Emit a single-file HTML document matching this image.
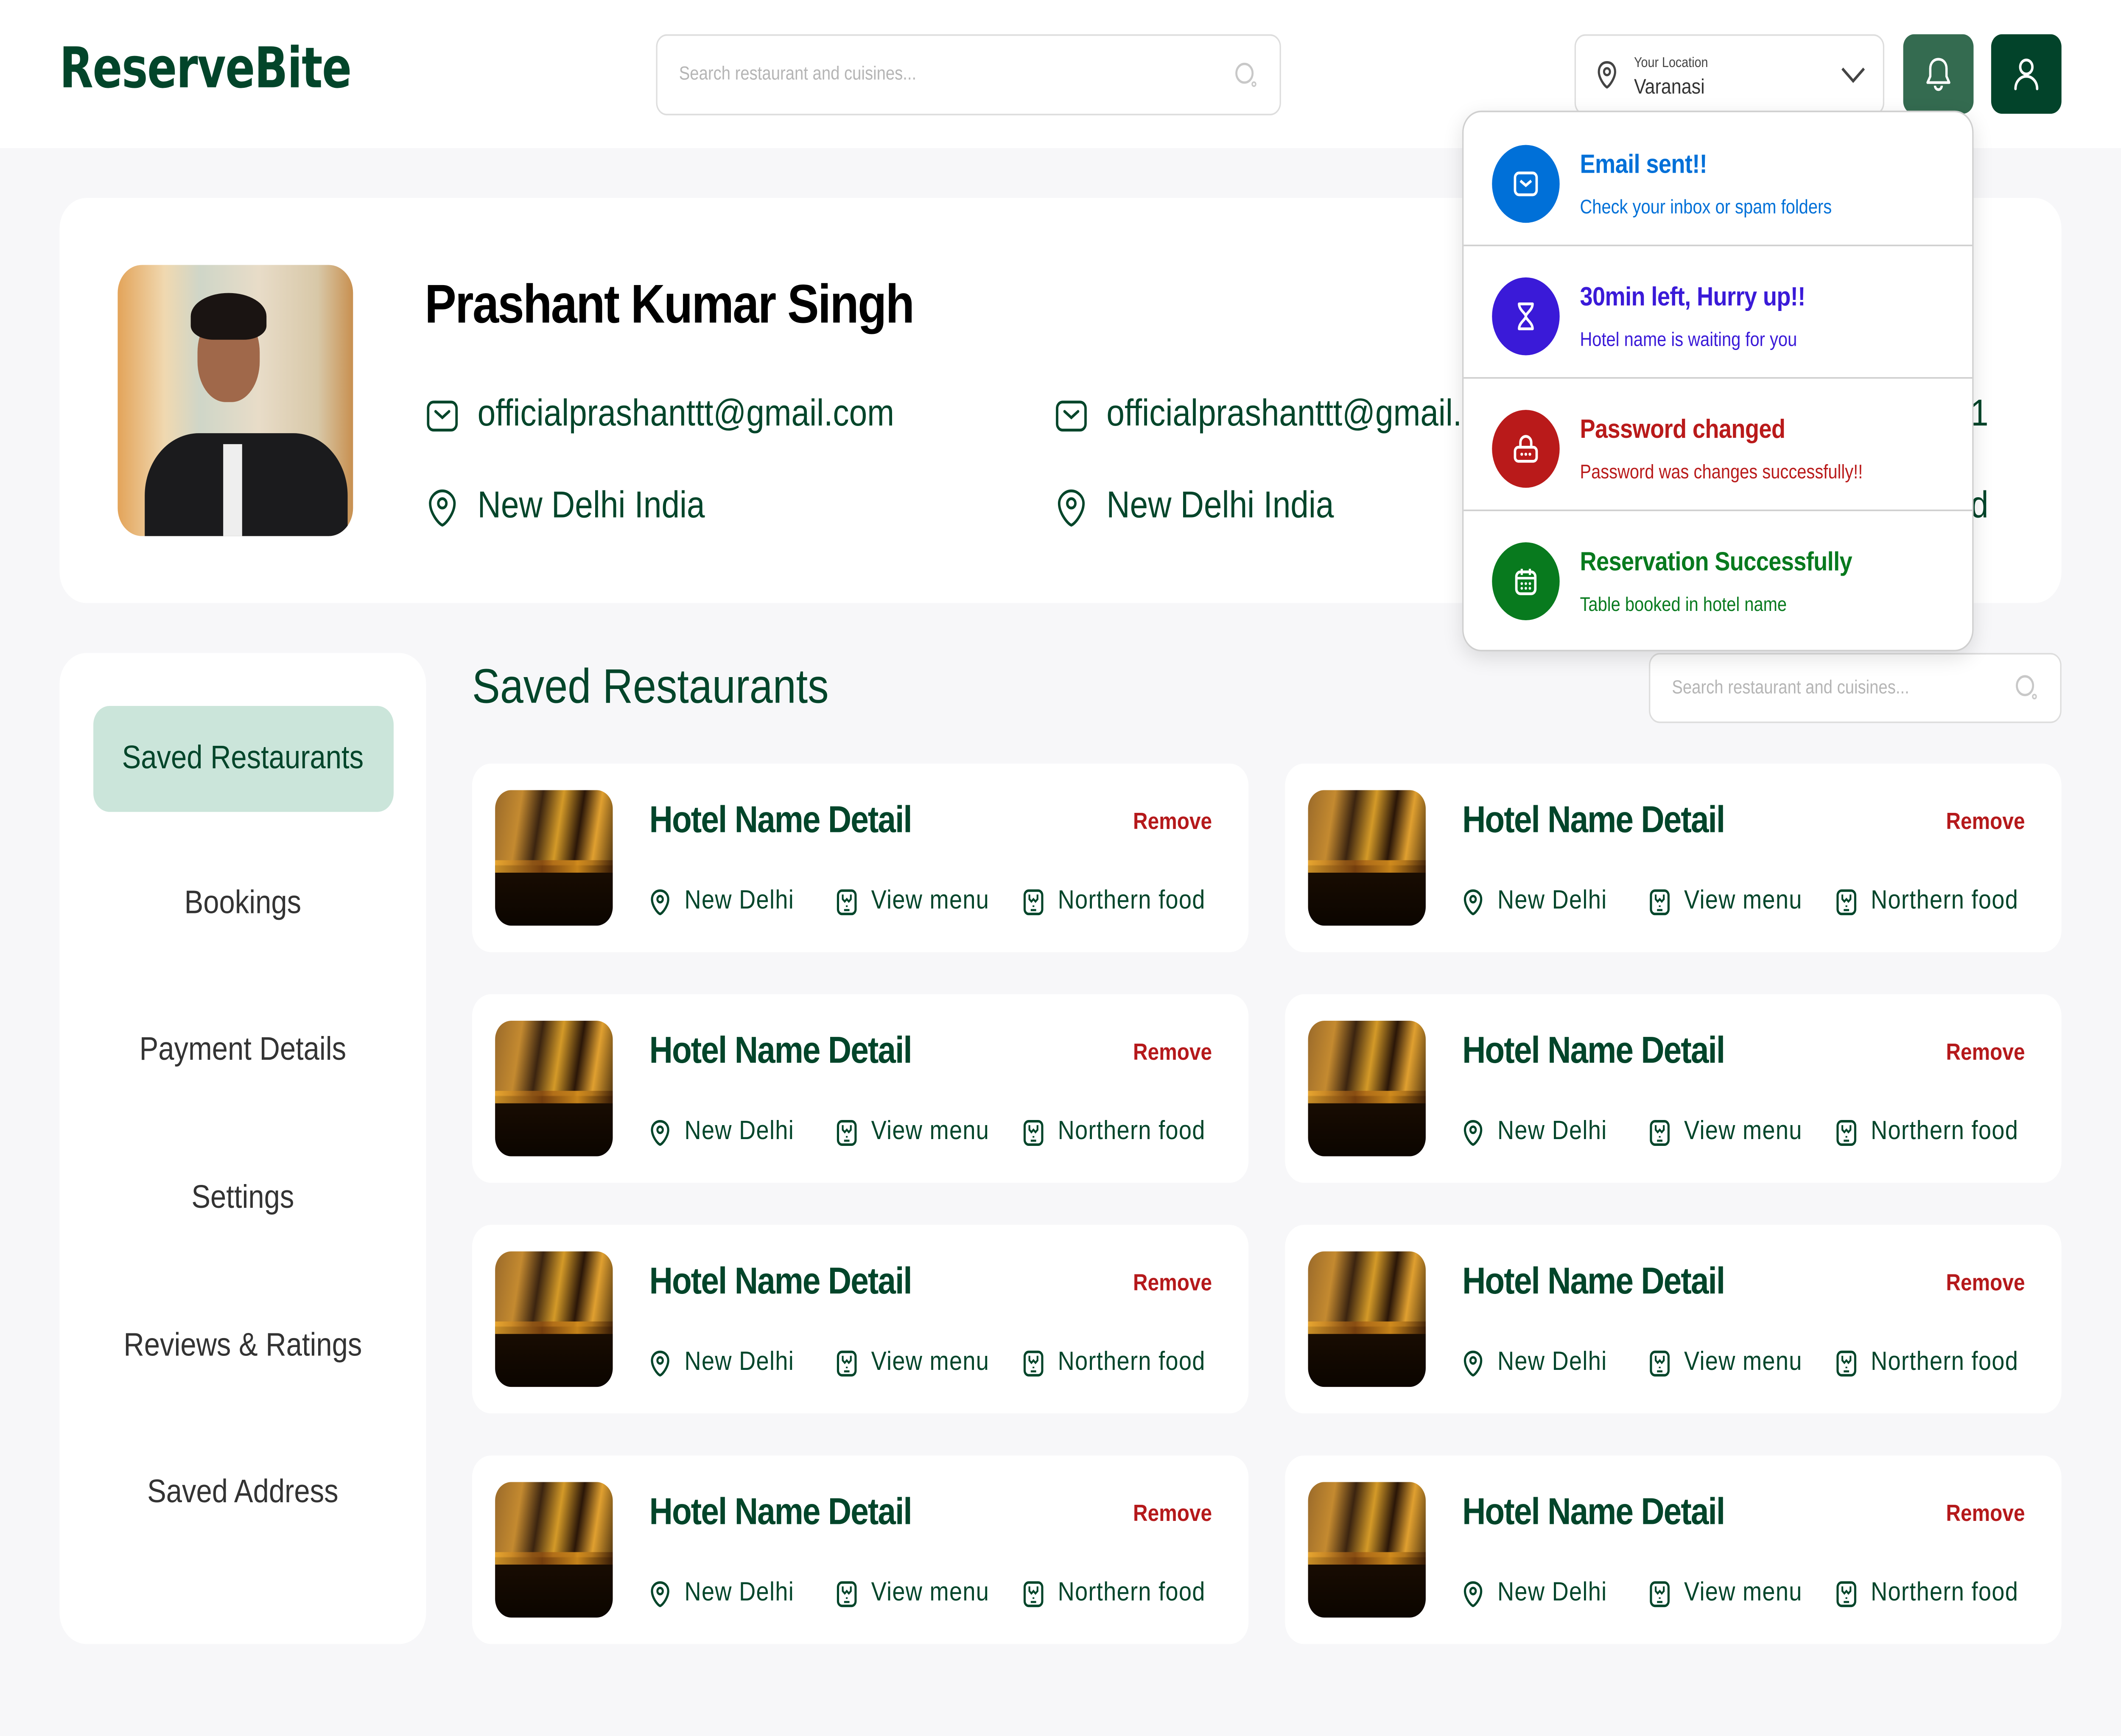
<!DOCTYPE html>
<html><head><meta charset="utf-8"><style>
html,body{margin:0;padding:0;width:100%;height:100%;overflow:hidden;}
body{background:#f7f7f9;font-family:"Liberation Sans",sans-serif;}
#w{position:absolute;left:0;top:0;width:1568px;height:1114px;transform-origin:0 0;transform:scale(3.673469);background:#f7f7f9;overflow:hidden;}
.a{position:absolute;}
.hdr{left:0;top:0;width:1568px;height:95px;background:#fff;}
.logo{left:44px;top:24px;font-size:36px;color:#02452a;font-weight:bold;font-family:"DejaVu Sans","Liberation Sans",sans-serif;letter-spacing:-0.5px;transform:scaleX(0.9);transform-origin:0 0;}
.sb{background:#fff;border:1.5px solid #ddd;border-radius:8px;box-sizing:border-box;}
.ph{font-size:12px;color:#b5b5b5;}
.card{background:#fff;border-radius:14px;width:574px;height:121px;overflow:hidden;}
.img{left:17px;top:17px;width:87px;height:87px;border-radius:12px;overflow:hidden;
background:linear-gradient(180deg,rgba(0,0,0,0) 55%,#1a0d02 56%,#0b0500 100%),linear-gradient(100deg,#9a6a2a 0%,#c48a30 20%,#3b2410 35%,#d49a28 50%,#2a1608 65%,#e0a030 78%,#1a0c04 100%);}
.img:before{content:"";position:absolute;left:0;top:52%;width:100%;height:8px;background:linear-gradient(90deg,#f5b030,#8a4a10 40%,#f0a020 70%,#402008);opacity:.8}
.ttl{left:131px;top:23px;font-size:24px;font-weight:bold;color:#02452a;line-height:28px;letter-spacing:-0.6px;}
.rm{right:27px;top:29px;font-size:15px;color:#b5191b;font-weight:bold;line-height:18px;}
.rw{top:78px;font-size:17px;color:#02452a;line-height:20px;letter-spacing:0.4px;}
.ic{top:80px;}
.side{left:44px;top:419px;width:271px;height:636px;background:#fff;border-radius:20px;}
.si{left:0;width:271px;text-align:center;font-size:21px;color:#333;line-height:26px;}
.nt{left:1081px;top:71px;width:378px;height:347px;background:#fff;border:1px solid #cfcfcf;border-radius:14px;box-shadow:0 4px 14px rgba(0,0,0,.12);box-sizing:border-box;overflow:hidden;}
.ni{left:0;width:378px;height:85px;border-bottom:1px solid #cfcfcf;}
.cir{left:21px;top:21px;width:50px;height:50px;border-radius:50%;}
.nt1{left:86px;top:23px;font-size:17px;font-weight:bold;line-height:22px;letter-spacing:-0.2px;}
.nt2{left:86px;top:53px;font-size:12.5px;line-height:16px;}
.pt{font-size:24px;color:#02452a;line-height:28px;}
</style></head><body><div id="w">

<div class="a hdr"></div>
<div class="a logo">ReserveBite</div>
<div class="a sb" style="left:485px;top:22px;width:462px;height:52px;"></div>
<div class="a ph" style="left:502px;top:40px;">Search restaurant and cuisines...</div>
<svg class="a" style="left:912px;top:39px" width="18" height="18" viewBox="0 0 18 18"><circle cx="8" cy="8" r="6" fill="none" stroke="#c8c8c8" stroke-width="1.5"/><circle cx="15" cy="15" r="1.3" fill="none" stroke="#c8c8c8" stroke-width="1"/></svg>

<div class="a sb" style="left:1164px;top:22px;width:229px;height:52px;"></div>
<svg class="a" style="left:1179px;top:38px" width="18" height="20" viewBox="0 0 18 20"><path d="M9 2C5 2 3 5 3 8c0 4 4 9 6 10 2-1 6-6 6-10 0-3-2-6-6-6z" fill="none" stroke="#444" stroke-width="1.6"/><circle cx="9" cy="8" r="2.2" fill="none" stroke="#444" stroke-width="1.5"/></svg>
<div class="a" style="left:1208px;top:35px;font-size:9px;color:#444;">Your Location</div>
<div class="a" style="left:1208px;top:48px;font-size:13.5px;color:#333;">Varanasi</div>
<svg class="a" style="left:1360px;top:41px" width="20" height="14" viewBox="0 0 20 14"><path d="M2 3l8 8 8-8" fill="none" stroke="#444" stroke-width="1.8"/></svg>

<div class="a" style="left:1407px;top:22px;width:52px;height:51px;border-radius:8px;background:#346b50;"></div>
<svg class="a" style="left:1422px;top:36px" width="22" height="24" viewBox="0 0 22 24"><path d="M11 2c-4 0-6 3-6 6v5l-2 4h16l-2-4V8c0-3-2-6-6-6z" fill="none" stroke="#fff" stroke-width="1.7" stroke-linejoin="round"/><path d="M8.5 19a2.5 2.5 0 005 0" fill="none" stroke="#fff" stroke-width="1.7"/></svg>
<div class="a" style="left:1472px;top:22px;width:52px;height:51px;border-radius:8px;background:#02432a;"></div>
<svg class="a" style="left:1487px;top:35px" width="22" height="24" viewBox="0 0 22 24"><circle cx="11" cy="8" r="4.5" fill="none" stroke="#fff" stroke-width="1.8"/><path d="M3 22c0-5 4-8 8-8s8 3 8 8" fill="none" stroke="#fff" stroke-width="1.8" stroke-linecap="round"/></svg>

<div class="a" style="left:44px;top:127px;width:1480px;height:260px;background:#fff;border-radius:20px;"></div>
<div class="a" style="left:87px;top:170px;width:174px;height:174px;border-radius:18px;overflow:hidden;background:linear-gradient(90deg,#e3a45a 0%,#f0d8b0 20%,#cfd6c8 35%,#e8dcc8 60%,#d8c8a8 85%,#c89050 100%);">
 <div class="a" style="left:20px;top:108px;width:150px;height:80px;border-radius:40px 40px 0 0;background:#1b1b1d;"></div>
 <div class="a" style="left:78px;top:115px;width:14px;height:60px;background:#eee;"></div>
 <div class="a" style="left:59px;top:30px;width:46px;height:58px;border-radius:45%;background:#a0684a;"></div>
 <div class="a" style="left:54px;top:18px;width:56px;height:30px;border-radius:50% 50% 30% 30%;background:#1a1412;"></div>
</div>
<div class="a" style="left:314px;top:175px;font-size:35px;font-weight:bold;color:#000;line-height:42px;letter-spacing:-0.8px;">Prashant Kumar Singh</div>

<svg class="a" style="left:315px;top:256px" width="24" height="22" viewBox="0 0 24 22"><rect x="1.5" y="2" width="21" height="18" rx="4" fill="none" stroke="#02452a" stroke-width="1.8"/><path d="M7 8l5 4 5-4" fill="none" stroke="#02452a" stroke-width="1.8" stroke-linecap="round"/></svg>
<div class="a pt" style="left:353px;top:252px;">officialprashanttt@gmail.com</div>
<svg class="a" style="left:315px;top:313px" width="24" height="26" viewBox="0 0 24 26"><path d="M12 2C7 2 3 6 3 10c0 6 6 13 9 14 3-1 9-8 9-14 0-4-4-8-9-8z" fill="none" stroke="#02452a" stroke-width="1.8"/><circle cx="12" cy="10" r="3" fill="none" stroke="#02452a" stroke-width="1.8"/></svg>
<div class="a pt" style="left:353px;top:311px;">New Delhi India</div>

<svg class="a" style="left:780px;top:256px" width="24" height="22" viewBox="0 0 24 22"><rect x="1.5" y="2" width="21" height="18" rx="4" fill="none" stroke="#02452a" stroke-width="1.8"/><path d="M7 8l5 4 5-4" fill="none" stroke="#02452a" stroke-width="1.8" stroke-linecap="round"/></svg>
<div class="a pt" style="left:818px;top:252px;">officialprashanttt@gmail.com</div>
<svg class="a" style="left:780px;top:313px" width="24" height="26" viewBox="0 0 24 26"><path d="M12 2C7 2 3 6 3 10c0 6 6 13 9 14 3-1 9-8 9-14 0-4-4-8-9-8z" fill="none" stroke="#02452a" stroke-width="1.8"/><circle cx="12" cy="10" r="3" fill="none" stroke="#02452a" stroke-width="1.8"/></svg>
<div class="a pt" style="left:818px;top:311px;">New Delhi India</div>
<div class="a pt" style="left:1268px;top:252px;width:202px;text-align:right;">+91 98765 43211</div>
<div class="a pt" style="left:1268px;top:311px;width:202px;text-align:right;">Greenfield</div>

<div class="a side">
 <div class="a" style="left:25px;top:34px;width:222px;height:68px;background:#cbe5da;border-radius:12px;"></div>
 <div class="a si" style="top:55px;color:#02452a;">Saved Restaurants</div>
 <div class="a si" style="top:148px;">Bookings</div>
 <div class="a si" style="top:242px;">Payment Details</div>
 <div class="a si" style="top:337px;">Settings</div>
 <div class="a si" style="top:432px;">Reviews &amp; Ratings</div>
 <div class="a si" style="top:526px;">Saved Address</div>
</div>

<div class="a" style="left:349px;top:422px;font-size:31px;color:#02452a;line-height:38px;">Saved Restaurants</div>
<div class="a sb" style="left:1219px;top:419px;width:305px;height:45px;"></div>
<div class="a ph" style="left:1236px;top:434px;">Search restaurant and cuisines...</div>
<svg class="a" style="left:1489px;top:432px" width="18" height="18" viewBox="0 0 18 18"><circle cx="8" cy="8" r="6" fill="none" stroke="#c8c8c8" stroke-width="1.5"/><circle cx="15" cy="15" r="1.3" fill="none" stroke="#c8c8c8" stroke-width="1"/></svg>

<svg width="0" height="0" style="position:absolute;left:0;top:0"><defs>
<symbol id="pin" viewBox="0 0 16 18"><path d="M8 1.5C4.5 1.5 2 4 2 7c0 4 4 9 6 9.5 2-.5 6-5.5 6-9.5 0-3-2.5-5.5-6-5.5z" fill="none" stroke="#02452a" stroke-width="1.6"/><circle cx="8" cy="7" r="2" fill="none" stroke="#02452a" stroke-width="1.5"/></symbol>
<symbol id="mn" viewBox="0 0 16 18"><rect x="1.5" y="1.5" width="13" height="15" rx="3" fill="none" stroke="#02452a" stroke-width="1.6"/><path d="M5 4v3l1.5 1.5L8 7l1.5 1.5L11 7V4M8 11v1M6 14h4" fill="none" stroke="#02452a" stroke-width="1.3"/></symbol>
</defs></svg>

<div id="cards"></div>

<div class="a nt">
 <div class="a ni" style="top:0;">
  <div class="a cir" style="background:#0070d8;"></div>
  <svg class="a" style="left:36px;top:36px" width="20" height="20" viewBox="0 0 20 20"><rect x="2" y="3" width="16" height="14" rx="3" fill="none" stroke="#fff" stroke-width="1.8"/><path d="M6 8l4 3 4-3" fill="none" stroke="#fff" stroke-width="1.8"/></svg>
  <div class="a nt1" style="color:#0070d8;">Email sent!!</div>
  <div class="a nt2" style="color:#0070d8;">Check your inbox or spam folders</div>
 </div>
 <div class="a ni" style="top:85px;">
  <div class="a cir" style="background:#3a1ad8;"></div>
  <svg class="a" style="left:36px;top:36px" width="20" height="20" viewBox="0 0 20 20"><path d="M5 2h10c0 4-5 6-5 8 0 2 5 4 5 8H5c0-4 5-6 5-8 0-2-5-4-5-8z" fill="none" stroke="#fff" stroke-width="1.8" stroke-linejoin="round"/></svg>
  <div class="a nt1" style="color:#3a1ad8;">30min left, Hurry up!!</div>
  <div class="a nt2" style="color:#3a1ad8;">Hotel name is waiting for you</div>
 </div>
 <div class="a ni" style="top:170px;">
  <div class="a cir" style="background:#b91a1a;"></div>
  <svg class="a" style="left:36px;top:35px" width="20" height="22" viewBox="0 0 20 22"><path d="M6 10V7a4 4 0 018 0v3" fill="none" stroke="#fff" stroke-width="1.8"/><rect x="2" y="10" width="16" height="9" rx="2.5" fill="none" stroke="#fff" stroke-width="1.8"/><circle cx="7" cy="14.5" r="1" fill="#fff"/><circle cx="10" cy="14.5" r="1" fill="#fff"/><circle cx="13" cy="14.5" r="1" fill="#fff"/></svg>
  <div class="a nt1" style="color:#b91a1a;">Password changed</div>
  <div class="a nt2" style="color:#b91a1a;">Password was changes successfully!!</div>
 </div>
 <div class="a ni" style="top:255px;border-bottom:none;">
  <div class="a cir" style="background:#087a1e;"></div>
  <svg class="a" style="left:36px;top:36px" width="20" height="20" viewBox="0 0 20 20"><rect x="3" y="4" width="14" height="14" rx="3" fill="none" stroke="#fff" stroke-width="1.8"/><path d="M7 2v4M13 2v4M3 8h14" stroke="#fff" stroke-width="1.6"/><circle cx="7" cy="11.5" r=".9" fill="#fff"/><circle cx="10" cy="11.5" r=".9" fill="#fff"/><circle cx="13" cy="11.5" r=".9" fill="#fff"/><circle cx="7" cy="14.5" r=".9" fill="#fff"/><circle cx="10" cy="14.5" r=".9" fill="#fff"/><circle cx="13" cy="14.5" r=".9" fill="#fff"/></svg>
  <div class="a nt1" style="color:#087a1e;">Reservation Successfully</div>
  <div class="a nt2" style="color:#087a1e;">Table booked in hotel name</div>
 </div>
</div>

</div>
<script>
var h='';var xs=[349,950],ys=[490,638,786,934];
ys.forEach(function(y){xs.forEach(function(x){
h+='<div class="a card" style="left:'+x+'px;top:'+y+'px"><div class="a img"></div><div class="a ttl">Hotel Name Detail</div><div class="a rm">Remove</div>'+
'<svg class="a ic" style="left:131px" width="16" height="18"><use href="#pin"/></svg><div class="a rw" style="left:157px">New Delhi</div>'+
'<svg class="a ic" style="left:269px" width="16" height="18"><use href="#mn"/></svg><div class="a rw" style="left:295px">View menu</div>'+
'<svg class="a ic" style="left:407px" width="16" height="18"><use href="#mn"/></svg><div class="a rw" style="left:433px">Northern food</div></div>';
});});
document.getElementById('cards').innerHTML=h;
(function(){
 var W=document.documentElement.clientWidth||window.innerWidth||5760;
 var H=document.documentElement.clientHeight||window.innerHeight||4092;
 document.getElementById('w').style.transform='scale('+(W/1568)+','+(H/1114)+')';
})();
</script>
</body></html>
